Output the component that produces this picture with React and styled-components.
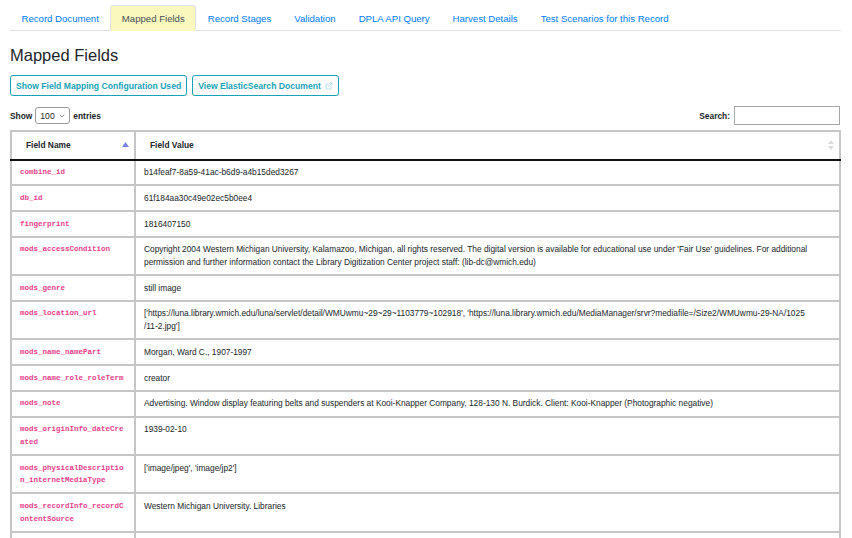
import React from 'react';
import styled, { createGlobalStyle } from 'styled-components';
import { ExternalLink, ChevronDown } from 'lucide-react';

const GlobalStyle = createGlobalStyle`
    body {
        margin: 0;
        background: #ffffff;
        font-family: "Liberation Sans", Arial, sans-serif;
        color: #212529;
    }
`;

const Page = styled.div`
    padding: 5px 11px 0 10px;
`;

const Tabs = styled.ul`
    display: flex;
    list-style: none;
    margin: 0;
    padding: 0;
    border-bottom: 1px solid #dee2e6;
`;

const Tab = styled.li`
    height: 26px;
    box-sizing: border-box;
    display: flex;
    align-items: center;
    padding: 0 10.5px 0 10.5px;
    margin-bottom: -1px;
    font-size: 9.6px;
    border: 1px solid ${props => props.active ? '#dee2e6' : 'transparent'};
    border-bottom-color: ${props => props.active ? '#fbf8bd' : 'transparent'};
    border-radius: 3px 3px 0 0;
    background: ${props => props.active ? '#fbf8bd' : 'transparent'};
    color: ${props => props.active ? '#495057' : '#007bff'};
`;

const Title = styled.h3`
    margin: 15px 0 0 0;
    font-size: 16.5px;
    font-weight: 400;
    line-height: 19px;
    color: #212529;
`;

const ButtonRow = styled.div`
    display: flex;
    gap: 5px;
    margin-top: 10px;
`;

const OutlineButton = styled.button`
    display: flex;
    align-items: center;
    gap: 4px;
    height: 21px;
    padding: 0 5px;
    border: 1px solid #17a2b8;
    border-radius: 3px;
    background: #fff;
    color: #17a2b8;
    font-family: "Liberation Sans", Arial, sans-serif;
    font-size: 8.6px;
    font-weight: 700;
`;

const Controls = styled.div`
    display: flex;
    justify-content: space-between;
    align-items: center;
    margin-top: 10px;
    font-size: 8.4px;
    font-weight: 700;
`;

const Length = styled.label`
    display: flex;
    align-items: center;
    gap: 3px;
`;

const SelectWrap = styled.span`
    position: relative;
    display: inline-flex;
    align-items: center;
`;

const Select = styled.select`
    appearance: none;
    width: 35px;
    height: 17px;
    padding: 0 0 0 4px;
    border: 1px solid #9a9a9a;
    border-radius: 3px;
    background: #fff;
    font-family: "Liberation Sans", Arial, sans-serif;
    font-size: 8.6px;
    color: #212529;
`;

const SelectArrow = styled(ChevronDown)`
    position: absolute;
    right: 4px;
    pointer-events: none;
    color: #555;
`;

const SearchLabel = styled.label`
    display: flex;
    align-items: center;
    gap: 4px;
`;

const SearchInput = styled.input`
    width: 106px;
    height: 19px;
    box-sizing: border-box;
    border: 1px solid #a6a6a6;
    border-radius: 0;
    margin-right: 1px;
`;

const Table = styled.table`
    width: 831px;
    margin-top: 5px;
    border-collapse: collapse;
    table-layout: fixed;
    font-size: 8.35px;
    line-height: 12.65px;
    border: 2px solid #c6c6c6;
`;

const HeadCell = styled.th`
    position: relative;
    box-sizing: border-box;
    height: 28.5px;
    padding: 0 14px;
    text-align: left;
    font-weight: 700;
    font-size: 8.4px;
    border-right: 2px solid #c6c6c6;
    border-bottom: 2px solid #111;
    width: ${props => props.w || 'auto'};
`;

const SortIcon = styled.svg`
    position: absolute;
    right: 5px;
    top: 50%;
    transform: translateY(-50%);
`;

const Cell = styled.td`
    padding: 5.55px 8px;
    vertical-align: top;
    border-right: 2px solid #c6c6c6;
    border-bottom: 2px solid #c6c6c6;
    color: #212529;
    word-break: break-word;
`;

const Code = styled.code`
    display: block;
    line-height: 12.65px;
    font-family: "Liberation Mono", "DejaVu Sans Mono", monospace;
    font-size: 7.5px;
    font-weight: 700;
    color: #e83e8c;
    word-break: break-all;
`;

const tabs = [
    'Record Document',
    'Mapped Fields',
    'Record Stages',
    'Validation',
    'DPLA API Query',
    'Harvest Details',
    'Test Scenarios for this Record',
];

// \u200B marks where the long url list wraps in the original view
const rows = [
    ['combine_id', 'b14feaf7-8a59-41ac-b6d9-a4b15ded3267'],
    ['db_id', '61f184aa30c49e02ec5b0ee4'],
    ['fingerprint', '1816407150'],
    ['mods_accessCondition', "Copyright 2004 Western Michigan University, Kalamazoo, Michigan, all rights reserved. The digital version is available for educational use under 'Fair Use' guidelines. For additional permission and further information contact the Library Digitization Center project staff: (lib-dc@wmich.edu)"],
    ['mods_genre', 'still image'],
    ['mods_location_url', "['https://luna.library.wmich.edu/luna/servlet/detail/WMUwmu~29~29~1103779~102918', 'https://luna.library.wmich.edu/MediaManager/srvr?mediafile=/Size2/WMUwmu\u201129\u2011NA/1025\u200B/11\u20112.jpg']"],
    ['mods_name_namePart', 'Morgan, Ward C., 1907-1997'],
    ['mods_name_role_roleTerm', 'creator'],
    ['mods_note', 'Advertising. Window display featuring belts and suspenders at Kooi-Knapper Company, 128-130 N. Burdick. Client: Kooi-Knapper (Photographic negative)'],
    ['mods_originInfo_dateCreated', '1939-02-10'],
    ['mods_physicalDescription_internetMediaType', "['image/jpeg', 'image/jp2']"],
    ['mods_recordInfo_recordContentSource', 'Western Michigan University. Libraries'],
    ['mods_subject_geographic', 'Kalamazoo (Mich.)'],
];

const App = () => {
    return (
        <Page>
            <GlobalStyle />
            <Tabs>
                {tabs.map(t => (
                    <Tab key={t} active={t === 'Mapped Fields'}>{t}</Tab>
                ))}
            </Tabs>

            <Title>Mapped Fields</Title>

            <ButtonRow>
                <OutlineButton>Show Field Mapping Configuration Used</OutlineButton>
                <OutlineButton>
                    View ElasticSearch Document
                    <ExternalLink size={8} strokeWidth={1.6} color="#7fcbd6" />
                </OutlineButton>
            </ButtonRow>

            <Controls>
                <Length>
                    Show
                    <SelectWrap>
                        <Select defaultValue="100">
                            <option value="10">10</option>
                            <option value="25">25</option>
                            <option value="50">50</option>
                            <option value="100">100</option>
                        </Select>
                        <SelectArrow size={8} strokeWidth={2} />
                    </SelectWrap>
                    entries
                </Length>
                <SearchLabel>
                    Search:
                    <SearchInput type="text" />
                </SearchLabel>
            </Controls>

            <Table>
                <thead>
                    <tr>
                        <HeadCell w="124px">
                            Field Name
                            <SortIcon width="7" height="6" viewBox="0 0 7 6">
                                <path d="M3.5 0 L7 5 L0 5 Z" fill="#7b83e0" />
                            </SortIcon>
                        </HeadCell>
                        <HeadCell>
                            Field Value
                            <SortIcon width="6" height="10" viewBox="0 0 6 10">
                                <path d="M3 0 L6 4 L0 4 Z" fill="#dcdcdc" />
                                <path d="M3 10 L6 6 L0 6 Z" fill="#dcdcdc" />
                            </SortIcon>
                        </HeadCell>
                    </tr>
                </thead>
                <tbody>
                    {rows.map(([name, value]) => (
                        <tr key={name}>
                            <Cell><Code>{name}</Code></Cell>
                            <Cell>{value}</Cell>
                        </tr>
                    ))}
                </tbody>
            </Table>
        </Page>
    );
}

export default App;
